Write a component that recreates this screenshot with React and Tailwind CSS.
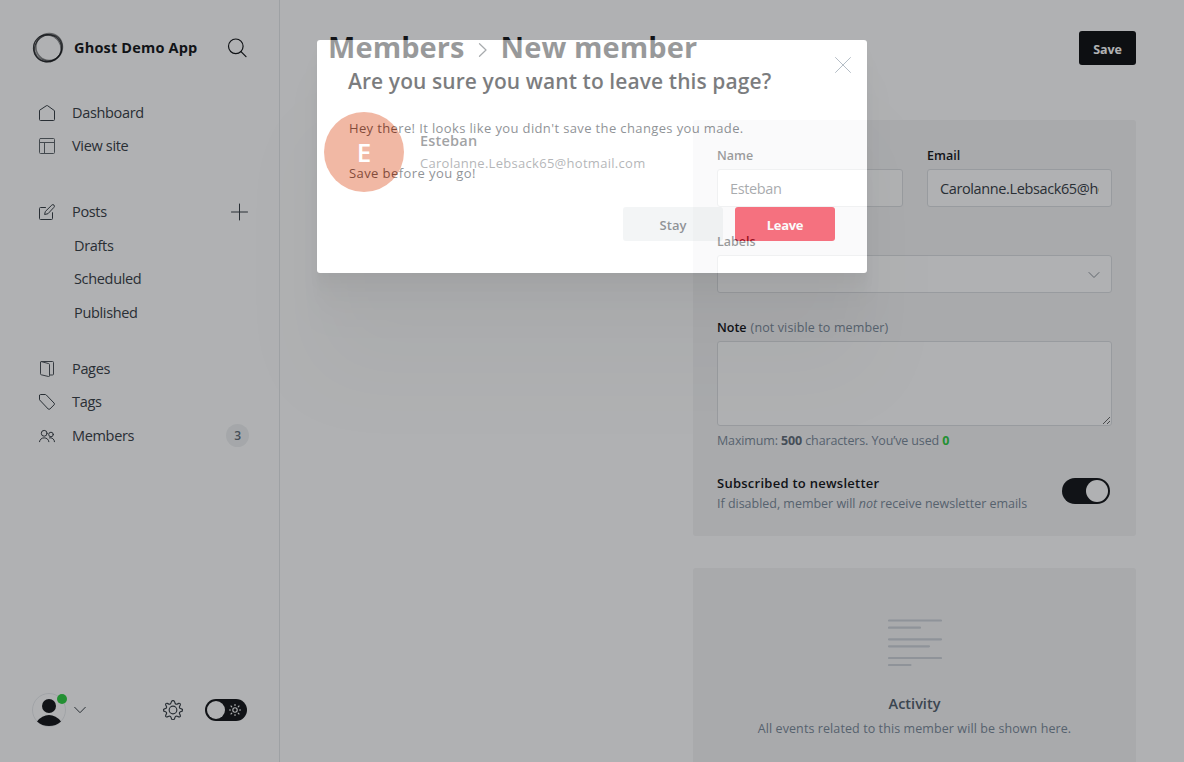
import React from "react";

const line = {
  fill: "none",
  stroke: "currentColor",
  strokeLinecap: "round",
  strokeLinejoin: "round",
};

function HomeIcon() {
  return (
    <svg className="h-4 w-4" viewBox="0 0 16 16" {...line}>
      <path d="M.5 5.700V14.500a1 1 0 0 0 1 1h13a1 1 0 0 0 1-1V5.700L8.600.7a1 1 0 0 0-1.200 0z" />
    </svg>
  );
}

function LayoutIcon() {
  return (
    <svg className="h-4 w-4 opacity-80" viewBox="0 0 16 16" {...line}>
      <rect x=".5" y=".5" width="15" height="15" rx="1" />
      <path d="M.5 4.500h15M5.500 4.500v11" />
    </svg>
  );
}

function PostIcon() {
  return (
    <svg className="h-4 w-4" viewBox="0 0 16 16" {...line}>
      <path d="M13.500 8.700V14.500a1 1 0 0 1-1 1H1.500a1 1 0 0 1-1-1V4.500a1 1 0 0 1 1-1H6.500" />
      <path d="M8.600 9.800l-3 .7.700-3 6.500-6.400a1.500 1.500 0 0 1 2.200 2.200z" />
    </svg>
  );
}

function PagesIcon() {
  return (
    <svg className="h-4 w-4 opacity-90" viewBox="0 0 16 16" {...line}>
      <path d="M1.500 1.300v11.500a1 1 0 0 0 .8 1l7.200 1.700a.8.8 0 0 0 1-.8V3.600a1 1 0 0 0-.8-1L2.300.6" />
      <path d="M1.500 1.300a.8.8 0 0 1 .8-.8H13.500a1 1 0 0 1 1 1v11.500a1 1 0 0 1-1 1h-3" />
    </svg>
  );
}

function TagIcon() {
  return (
    <svg className="h-4 w-4" viewBox="0 0 16 16" {...line}>
      <path d="M.5 1.500v4.300l8.700 9.200a1.200 1.200 0 0 0 1.700 0l4.200-4.200a1.200 1.200 0 0 0 0-1.700L7.200.9A1.500 1.500 0 0 0 6.200.5H1.500a1 1 0 0 0-1 1z" />
    </svg>
  );
}

function MembersIcon() {
  return (
    <svg className="h-4 w-4" viewBox="0 0 16 16" {...line}>
      <circle cx="5.200" cy="5.300" r="2.900" />
      <circle cx="12" cy="6.500" r="2.300" />
      <path d="M.5 13.700a4.800 4.800 0 0 1 9.400 0M10.500 9.800a4 4 0 0 1 5 3.900" />
    </svg>
  );
}

function NavItem({ icon, label, children }) {
  return (
    <div className="flex h-[33.500px] items-center pr-8 pl-[39px]">
      <span className="flex w-[33px] text-[#394047]">{icon}</span>
      <span className="grow">{label}</span>
      {children}
    </div>
  );
}

function SubItem({ label }) {
  return <div className="flex h-[33.500px] items-center pl-[74px]">{label}</div>;
}

function Sidebar() {
  return (
    <aside className="flex h-full w-[280px] shrink-0 flex-col border-r border-[#e5e8ea] text-[14.500px] tracking-[-0.330px] text-[#394047]">
      <div className="flex h-[96px] items-center pl-8">
        <svg className="h-8 w-8" viewBox="0 0 32 32" fill="none" stroke="#15171a">
          <ellipse cx="15.500" cy="16.200" rx="14" ry="13.500" strokeWidth="1.300" opacity=".75" />
          <ellipse cx="17.200" cy="15" rx="13.300" ry="13.600" strokeWidth="1.500" opacity=".5" />
          <ellipse cx="16" cy="16.400" rx="14.600" ry="12.900" strokeWidth="1" opacity=".65" transform="rotate(-38 16 16)" />
          <ellipse cx="15.300" cy="16.300" rx="14" ry="12.700" strokeWidth=".8" opacity=".5" transform="rotate(30 16 16)" />
          <ellipse cx="16.600" cy="16.200" rx="13.400" ry="13.900" strokeWidth=".8" opacity=".45" transform="rotate(35 16 16)" />
        </svg>
        <span className="w-[163px] pl-[10px] text-[14.500px] font-bold tracking-[0.180px] whitespace-nowrap text-[#15171a]">
          Ghost Demo App
        </span>
        <svg className="h-5 w-5 text-[#15171a]" viewBox="0 0 20 20" {...line} strokeWidth="1.200">
          <circle cx="8.800" cy="8.300" r="7.300" />
          <path d="M14 13.600l5 5" />
        </svg>
      </div>

      <nav className="flex flex-col">
        <NavItem icon={<HomeIcon />} label="Dashboard" />
        <NavItem icon={<LayoutIcon />} label="View site" />
        <div className="h-8" />
        <NavItem icon={<PostIcon />} label="Posts">
          <svg className="-mr-[1px] h-[18px] w-[18px]" viewBox="0 0 18 18" {...line}>
            <path d="M9.500 1v16M1.500 9h16" />
          </svg>
        </NavItem>
        <div className="pt-[0.500px]">
          <SubItem label="Drafts" />
          <SubItem label="Scheduled" />
          <SubItem label="Published" />
        </div>
        <div className="h-[22.500px]" />
        <NavItem icon={<PagesIcon />} label="Pages" />
        <NavItem icon={<TagIcon />} label="Tags" />
        <NavItem icon={<MembersIcon />} label="Members">
          <span className="-mr-[2px] flex h-[23px] w-[23px] items-center justify-center rounded-full bg-[#eff1f2] pt-[1px] text-[12px] font-semibold text-[#626d79]">
            3
          </span>
        </NavItem>
      </nav>

      <div className="mt-auto mb-[34px] flex h-9 items-center pl-8">
        <div className="relative h-[34px] w-[34px]">
          <svg className="h-[34px] w-[34px]" viewBox="0 0 34 34">
            <circle cx="17" cy="17" r="16.500" fill="none" stroke="#e9ebee" />
            <circle cx="17" cy="13" r="7" fill="#15171a" />
            <path d="M5 28.500Q10 22 17 22T29 28.500Q24 33 17 33T5 28.500z" fill="#15171a" />
          </svg>
          <span className="absolute top-[1px] -right-[1px] h-[10px] w-[10px] rounded-full bg-[#30cf43]" />
        </div>
        <svg className="ml-2 h-[12px] w-[12px]" viewBox="0 0 12 12" {...line}>
          <path d="M.7 3.300L6 8.700l5.300-5.400" />
        </svg>
        <svg className="ml-[77px] h-[20px] w-[20px]" viewBox="0 0 22 22" {...line} strokeWidth="1.300">
          <circle cx="11" cy="11" r="4.200" />
          <path d="M12.700 1.800l.6 1.700a1.700 1.700 0 0 0 2.300 1l1.700-.8a1.300 1.300 0 0 1 1.700 1.700l-.8 1.700a1.700 1.700 0 0 0 1 2.300l1.700.6a1.200 1.200 0 0 1 0 2.300l-1.700.6a1.700 1.700 0 0 0-1 2.300l.8 1.700a1.300 1.300 0 0 1-1.700 1.700l-1.700-.8a1.700 1.700 0 0 0-2.300 1l-.6 1.700a1.800 1.800 0 0 1-3.400 0l-.6-1.700a1.700 1.700 0 0 0-2.300-1l-1.700.8a1.300 1.300 0 0 1-1.700-1.700l.8-1.700a1.700 1.700 0 0 0-1-2.300l-1.700-.6a1.200 1.200 0 0 1 0-2.300l1.700-.6a1.700 1.700 0 0 0 1-2.300L3 5.400a1.300 1.300 0 0 1 1.700-1.700l1.700.8a1.700 1.700 0 0 0 2.300-1l.6-1.700a1.800 1.800 0 0 1 3.400 0z" />
        </svg>
        <div className="ml-[22px] flex h-[22px] w-[42px] items-center justify-between rounded-full bg-[#15171a] pr-[6px] pl-0.5">
          <span className="h-[18px] w-[18px] rounded-full bg-white" />
          <svg className="h-3 w-3 text-white" viewBox="0 0 12 12" {...line} strokeWidth="1.100">
            <circle cx="6" cy="6" r="2.200" />
            <path d="M6 .4v1.100M6 10.500v1.100M.4 6h1.100M10.500 6h1.100M2 2l.8.800M9.200 9.200l.8.800M2 10l.8-.8M9.200 2.800L10 2" />
          </svg>
        </div>
      </div>
    </aside>
  );
}

const label = "flex h-[18px] items-center pt-[2px] text-[12.500px] font-semibold text-[#15171a]";
const field =
  "flex h-[38px] items-center overflow-hidden rounded-[3px] border border-[#dddfe2] bg-white px-3 pt-[2px] text-[14.500px] tracking-[-0.380px] text-[#394047]";

function MemberForm() {
  return (
    <section className="flex h-[416px] flex-col rounded-[3px] bg-[#f5f5f6] px-6 pt-[26px]">
      <div className="grid grid-cols-[186px_185px] gap-6">
        <div>
          <div className={label}>Name</div>
          <div className={`mt-[5px] ${field}`}>Esteban</div>
        </div>
        <div>
          <div className={label}>Email</div>
          <div className={`mt-[5px] ${field}`}>
            <span className="overflow-hidden whitespace-nowrap">Carolanne.Lebsack65@hotmail.com</span>
          </div>
        </div>
      </div>
      <div className={`mt-[25px] ${label}`}>Labels</div>
      <div className={`mt-[5px] justify-end ${field}`}>
        <svg className="-mr-[1px] h-3 w-3 text-[#8b9299]" viewBox="0 0 12 12" {...line}>
          <path d="M1 3.500L6 8.500l5-5" />
        </svg>
      </div>
      <div className={`mt-[25px] ${label}`}>
        Note <span className="ml-1 font-normal tracking-[0.120px] text-[#7c8b9a]">(not visible to member)</span>
      </div>
      <textarea className="mt-[5px] block h-[85px] w-full shrink-0 resize rounded-[3px] border border-[#dddfe2] bg-white" />
      <p className="mt-[6px] h-[18px] text-[12.500px] leading-[18px] tracking-[-0.130px] whitespace-nowrap text-[#7c8b9a]">
        Maximum: <b className="text-[#626d79]">500</b> characters. You’ve used{" "}
        <b className="text-[#30cf43]">0</b>
      </p>
      <div className="mt-[23px] flex items-start justify-between">
        <div className="whitespace-nowrap">
          <div className="h-5 text-[13px] leading-5 font-semibold tracking-[0.260px] text-[#15171a]">
            Subscribed to newsletter
          </div>
          <p className="pt-[1px] text-[12.500px] leading-5 tracking-[-0.020px] text-[#7c8b9a]">
            If disabled, member will <em>not</em> receive newsletter emails
          </p>
        </div>
        <div className="mt-[5px] mr-0.5 flex h-[26px] w-12 items-center justify-end rounded-full bg-[#15171a] pr-0.5">
          <span className="h-[22px] w-[22px] rounded-full bg-white" />
        </div>
      </div>
    </section>
  );
}

function Activity() {
  return (
    <section className="flex grow flex-col items-center rounded-t-[3px] bg-[#f5f5f6] pt-[50px]">
      <svg className="h-[50px] w-[54px]" viewBox="0 0 54 50" stroke="#ced4d9" strokeWidth="2.200" strokeLinecap="round">
        <path d="M1 2.500h52M1 9.700h31M1 21.300h52M1 28.300h40M1 40h52M1 47h21.500" />
      </svg>
      <h4 className="mt-[26px] text-[14.500px] leading-5 font-semibold text-[#54616e]">Activity</h4>
      <p className="mt-[5px] text-[12.500px] leading-5 tracking-[0.090px] text-[#7c8b9a]">
        All events related to this member will be shown here.
      </p>
    </section>
  );
}

function LeaveDialog() {
  return (
    <div
      role="dialog"
      className="absolute top-10 left-[317px] flex h-[233px] w-[550px] flex-col rounded-[3px] bg-white px-8 pt-[25px] text-[#394047] opacity-[0.56] shadow-[0_2.8px_2.2px_rgba(0,0,0,0.02),0_6.7px_5.3px_rgba(0,0,0,0.028),0_12.5px_10px_rgba(0,0,0,0.035),0_22.3px_17.9px_rgba(0,0,0,0.042),0_41.8px_33.4px_rgba(0,0,0,0.05),0_100px_80px_rgba(0,0,0,0.07),0_0_0_2000px_rgba(8,12,18,0.57)]"
    >
      <h1 className="-ml-[1px] h-8 text-[21px] leading-8 font-semibold tracking-[0.080px] whitespace-nowrap text-[#15171a]">
        Are you sure you want to leave this page?
      </h1>
      <svg className="absolute top-[17px] right-4 h-4 w-4 text-[#7c8b9a]" viewBox="0 0 16 16" {...line}>
        <path d="M.5.5l15 15M15.500.5l-15 15" />
      </svg>
      <p className="mt-5 text-[13px] leading-[22px] tracking-[0.370px] whitespace-nowrap">
        Hey there! It looks like you didn't save the changes you made.
      </p>
      <p className="mt-[23px] text-[13px] leading-[22px] tracking-[0.420px]">Save before you go!</p>
      <div className="mt-[23px] flex justify-end gap-3 text-[13px]">
        <button className="h-[34px] w-[100px] rounded-[3px] bg-[#ebeef0] pt-[3px] font-semibold">Stay</button>
        <button className="h-[34px] w-[100px] rounded-[3px] bg-[#f50b23] pt-[3px] font-bold tracking-[-0.300px] text-white">
          Leave
        </button>
      </div>
    </div>
  );
}

export default function App() {
  return (
    <div className="relative flex h-[762px] w-[1184px] overflow-hidden bg-white font-['Open_Sans','Noto_Sans',sans-serif]">
      <Sidebar />
      <main className="flex grow flex-col pr-12 pl-12">
        <header className="flex h-24 items-center justify-between">
          <h2 className="-mt-[3px] flex items-center text-[29px] font-bold tracking-[0.080px] whitespace-nowrap text-[#15171a]">
            <span>Members</span>
            <svg className="mr-3 ml-[10px] mt-[6px] h-[14px] w-[14px] text-[#394047]" viewBox="0 0 14 14" {...line} strokeWidth="1.200">
              <path d="M4.500 .7L11 7 4.500 13.300" />
            </svg>
            <span>New member</span>
          </h2>
          <button className="h-[34px] w-[57px] rounded-[3px] bg-[#101214] pt-[4px] text-[12.500px] font-bold tracking-[-0.100px] text-white">
            Save
          </button>
        </header>
        <div className="flex grow justify-between pt-6">
          <div className="-ml-1 flex h-20 items-center -translate-y-2">
            <div className="flex h-20 w-20 items-center justify-center rounded-full bg-[#e15d30] text-[26px] font-semibold text-white">
              E
            </div>
            <div className="ml-4 flex flex-col">
              <h3 className="-mt-[2px] text-[14.500px] leading-6 font-semibold tracking-[0.200px] text-[#2a2d31]">Esteban</h3>
              <p className="text-[13px] leading-5 tracking-[0.290px] whitespace-nowrap text-[#54585e]">
                Carolanne.Lebsack65@hotmail.com
              </p>
            </div>
          </div>
          <div className="flex w-[443px] flex-col gap-8">
            <MemberForm />
            <Activity />
          </div>
        </div>
      </main>
      <LeaveDialog />
    </div>
  );
}
